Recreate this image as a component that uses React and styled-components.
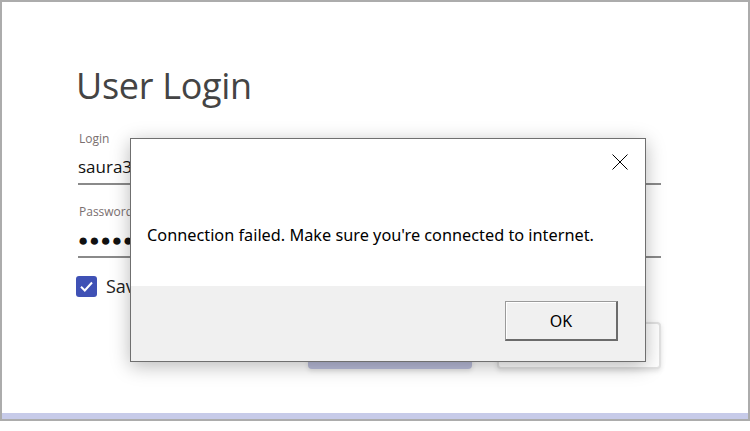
import React from "react";
import styled, { createGlobalStyle } from "styled-components";

const GlobalStyle = createGlobalStyle`
  html, body {
    margin: 0;
    padding: 0;
    background: #ffffff;
  }
  body {
    font-family: "Open Sans", "Noto Sans", sans-serif;
  }
`;

const Window = styled.div`
  position: relative;
  box-sizing: border-box;
  width: 750px;
  height: 421px;
  border: 2px solid #acacac;
  display: flex;
  flex-direction: column;
  background: #ffffff;
  overflow: hidden;
`;

const Page = styled.div`
  flex: 1;
  display: flex;
  flex-direction: column;
  padding: 60px 0 0 74px;
  width: 585px;
`;

const Title = styled.h1`
  margin: 0 0 21px 0;
  font-weight: 400;
  font-size: 36px;
  line-height: 48px;
  color: #444444;
  letter-spacing: -0.3px;
`;

const Field = styled.div`
  display: flex;
  flex-direction: column;
  margin-left: 2px;
  border-bottom: 2px solid #8a8a8a;
  margin-bottom: ${(p) => p.gap || 0}px;
`;

const Label = styled.label`
  font-size: 12px;
  line-height: 16px;
  color: #7a6f6f;
  padding-left: 1px;
`;

const Value = styled.div`
  font-size: 17px;
  line-height: 32px;
  height: 32px;
  padding-top: 4px;
  color: #111111;
  letter-spacing: ${(p) => (p.dots ? "1px" : "0")};
`;

const CheckRow = styled.div`
  display: flex;
  align-items: center;
  gap: 9px;
  margin-top: 18px;
  font-size: 18px;
  line-height: 21px;
  color: #222222;
`;

const Box = styled.span`
  width: 21px;
  height: 21px;
  border-radius: 3px;
  background: #3f51b5;
  display: flex;
  align-items: center;
  justify-content: center;
`;

const Buttons = styled.div`
  display: flex;
  justify-content: flex-end;
  gap: 25px;
  margin-top: 25px;
`;

const FormButton = styled.div`
  box-sizing: border-box;
  width: 164px;
  height: 47px;
  border-radius: 4px;
  background: ${(p) => (p.primary ? "#b9bcd9" : "#ffffff")};
  border: ${(p) => (p.primary ? "none" : "2px solid #e2e2e2")};
  box-shadow: 0 2px 5px rgba(0, 0, 0, 0.12);
`;

const BottomStrip = styled.div`
  height: 6px;
  background: #c7cbe9;
`;

const Dialog = styled.div`
  position: absolute;
  left: 128px;
  top: 136px;
  width: 516px;
  height: 224px;
  box-sizing: border-box;
  border: 1px solid #6f6f6f;
  background: #ffffff;
  display: flex;
  flex-direction: column;
  box-shadow: 0 4px 18px rgba(0, 0, 0, 0.28);
`;

const DialogBody = styled.div`
  position: relative;
  height: 147px;
  display: flex;
  align-items: center;
  padding: 44px 0 0 16px;
  box-sizing: border-box;
  font-family: "Noto Sans", "Open Sans", sans-serif;
  font-size: 16.3px;
  color: #000000;
`;

const Close = styled.div`
  position: absolute;
  right: 17px;
  top: 14px;
  width: 16px;
  height: 16px;
`;

const DialogFooter = styled.div`
  flex: 1;
  background: #f0f0f0;
  display: flex;
  justify-content: flex-end;
  align-items: flex-start;
  padding: 15px 27px 0 0;
`;

const OkButton = styled.div`
  box-sizing: border-box;
  width: 113px;
  height: 40px;
  background: #f0f0f0;
  border-top: 1px solid #9a9a9a;
  border-left: 1px solid #9a9a9a;
  border-right: 2px solid #6b6b6b;
  border-bottom: 2px solid #6b6b6b;
  box-shadow: inset 1px 1px 0 #ffffff;
  display: flex;
  align-items: center;
  justify-content: center;
  font-family: "Noto Sans", "Open Sans", sans-serif;
  font-size: 16px;
  color: #000000;
`;

export default function App() {
  return (
    <>
      <GlobalStyle />
      <Window>
        <Page>
          <Title>User Login</Title>
          <Field gap={19}>
            <Label>Login</Label>
            <Value>saura3788</Value>
          </Field>
          <Field>
            <Label>Password</Label>
            <Value dots>●●●●●●●●●●</Value>
          </Field>
          <CheckRow>
            <Box>
              <svg width="15" height="15" viewBox="0 0 15 15">
                <path d="M2 7.8 L5.8 11.5 L13 3.5" fill="none" stroke="#ffffff" strokeWidth="2" />
              </svg>
            </Box>
            <span>Save login</span>
          </CheckRow>
          <Buttons>
            <FormButton primary />
            <FormButton />
          </Buttons>
        </Page>
        <BottomStrip />
        <Dialog>
          <DialogBody>
            Connection failed. Make sure you're connected to internet.
            <Close>
              <svg width="16" height="16" viewBox="0 0 16 16">
                <path d="M0.5 0.5 L15.5 15.5 M15.5 0.5 L0.5 15.5" stroke="#000000" strokeWidth="1" />
              </svg>
            </Close>
          </DialogBody>
          <DialogFooter>
            <OkButton>OK</OkButton>
          </DialogFooter>
        </Dialog>
      </Window>
    </>
  );
}
